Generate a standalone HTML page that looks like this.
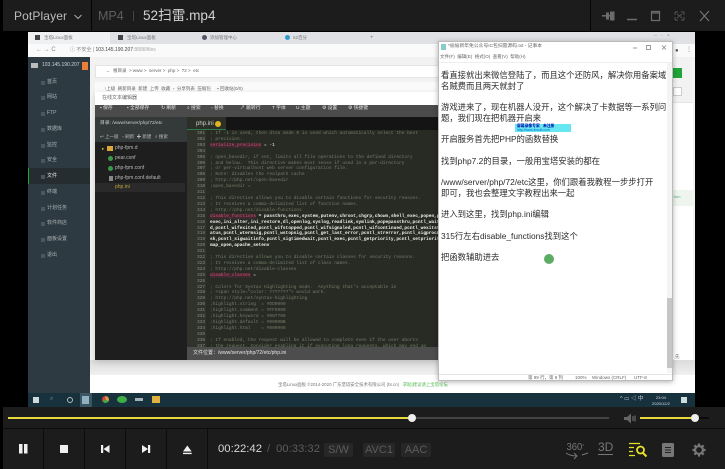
<!DOCTYPE html>
<html><head><meta charset="utf-8"><style>
*{margin:0;padding:0;box-sizing:border-box}
html,body{width:725px;height:469px;overflow:hidden;background:#000;font-family:"Liberation Sans","Noto Sans CJK SC",sans-serif}
.a{position:absolute;white-space:nowrap}
#v{position:absolute;left:28px;top:32px;width:667px;height:375px;background:#fff;overflow:hidden;filter:blur(.35px)}
#v .a{line-height:1}
.m{font-family:"Liberation Mono","Noto Sans CJK SC",monospace;font-size:4.5px;line-height:5.9px;white-space:pre}
#v .m{line-height:5.9px}
.n{font-family:"Liberation Sans","Noto Sans CJK SC",sans-serif;font-size:8.35px;color:#2c2c2c;left:3px;line-height:1}
.sb{color:#aab3b7;font-size:5px;left:19px}
.sb::before{content:"";position:absolute;left:-6px;top:.5px;width:4px;height:4px;background:#4a575e}
.tb{color:#e2e2e2;font-size:4.8px;top:75px}
.fi{left:87px;font-size:5px;color:#b8b8b8}
</style></head><body>
<div class="a" style="left:3px;top:0;width:722px;height:31px;background:#1c1c1c"></div>
<div class="a" style="left:91px;top:0;width:1px;height:31px;background:#050505"></div>
<div class="a" style="left:590px;top:0;width:1px;height:31px;background:#050505"></div>
<div class="a" style="left:14px;top:9px;font-size:12px;color:#bcbcbc;letter-spacing:.12px;line-height:15px">PotPlayer</div>
<svg class="a" style="left:74px;top:14px" width="8" height="6"><path d="M.5 1l3.500 3.500L7.500 1" stroke="#aaa" fill="none"/></svg>
<div class="a" style="left:98px;top:9px;font-size:12.500px;color:#5e5e5e;line-height:15px">MP4</div>
<div class="a" style="left:133px;top:11px;width:1px;height:10px;background:#444"></div>
<div class="a" style="left:143px;top:8px;font-size:13.600px;color:#d2d2d2;line-height:16px">52扫雷.mp4</div>
<svg class="a" style="left:600px;top:7px" width="120" height="18" fill="none" stroke="#6c6c6c">
<path d="M2 9h4M6 5.500h3v7H6M10 4.500h4.500v9H10z" fill="#6c6c6c" stroke="none"/><path d="M2 8.800h10" stroke-width="1.500"/>
<path d="M27 12.500h10" stroke-width="1.500"/>
<path d="M51.500 4.500h8v9h-8zM51.500 6h8" stroke-width="1.200"/>
<path d="M75 5h3M75 5v3M84 5h-3M84 5v3M75 13h3M75 13v-3M84 13h-3M84 13v-3M77 7l5 4M82 7l-5 4" stroke-width=".7"/>
<path d="M100 4l9 10M109 4l-9 10" stroke="#777" stroke-width="1.100"/></svg>

<div id="v">
<div class="a" style="left:0;top:0;width:667px;height:12px;background:#dfe1e5"></div>
<div class="a" style="left:0;top:0;width:82px;height:12px;background:#eef0f2"></div>
<div class="a" style="left:7px;top:3px;width:5px;height:5px;background:#444"></div><div class="a" style="left:16px;top:3.500px;font-size:4.500px;color:#777">宝塔Linux面板</div>
<div class="a" style="left:90px;top:3px;width:5px;height:5px;background:#444"></div><div class="a" style="left:99px;top:3.500px;font-size:4.500px;color:#777">宝塔Linux面板</div>
<div class="a" style="left:174px;top:3px;width:5px;height:5px;border-radius:3px;background:#556"></div><div class="a" style="left:182px;top:3.500px;font-size:4.500px;color:#777">添加管理中心</div>
<div class="a" style="left:257px;top:3px;width:5px;height:5px;border-radius:3px;background:#39c"></div><div class="a" style="left:265px;top:3.500px;font-size:4.500px;color:#777">52百分</div>
<div class="a" style="left:342px;top:2.500px;font-size:6px;color:#888">+</div>
<div class="a" style="left:0;top:12px;width:667px;height:13px;background:#fafafa"></div>
<div class="a" style="left:8px;top:15px;font-size:6px;color:#888">← → C</div>
<div class="a" style="left:42px;top:16px;font-size:5px;color:#888">ⓘ 不安全 | <span style="color:#444">103.145.190.207</span><span style="color:#aaa">:8888/files</span></div>
<div class="a" style="left:0;top:25px;width:62px;height:336px;background:#2e3a41"></div>
<div class="a" style="left:3px;top:31px;width:7px;height:5px;background:#bbb"></div>
<div class="a" style="left:14px;top:31px;font-size:5px;color:#cdd3d6">103.145.190.207</div>
<div class="a" style="left:54px;top:30px;width:6px;height:8px;background:#e8803a"></div>
<div class="a" style="left:0;top:136px;width:62px;height:16px;background:#262d31"></div>
<div class="a" style="left:0;top:136px;width:1px;height:16px;background:#20a53a"></div>
<div class="a sb" style="top:48px">首页</div><div class="a sb" style="top:63px">网站</div><div class="a sb" style="top:79px">FTP</div><div class="a sb" style="top:95px">数据库</div><div class="a sb" style="top:111px">监控</div><div class="a sb" style="top:126px">安全</div><div class="a sb" style="top:142px;color:#eee">文件</div><div class="a sb" style="top:158px">终端</div><div class="a sb" style="top:174px">计划任务</div><div class="a sb" style="top:189px">软件商店</div><div class="a sb" style="top:205px">面板设置</div><div class="a sb" style="top:221px">退出</div>
<div class="a" style="left:62px;top:25px;width:605px;height:336px;background:#f2f2f2"></div>
<div class="a" style="left:67px;top:33px;width:580px;height:13px;background:#fff;border:1px solid #e4e4e4"></div>
<div class="a" style="left:78px;top:37px;font-size:4.500px;color:#666">← &nbsp;根目录 &nbsp;&gt; www &gt; &nbsp;server &gt; &nbsp;php &gt; &nbsp;72 &gt; &nbsp;etc</div>
<div class="a" style="left:67px;top:50px;width:580px;height:12px;background:#fafafa"></div>
<div class="a" style="left:76px;top:55px;font-size:4.500px;color:#666">↑上级 &nbsp;刷新目录 &nbsp;新建 &nbsp;上传 &nbsp;收藏 &nbsp;▫ &nbsp;分享列表 &nbsp;压缩包 &nbsp; &nbsp; ▪ 回收站(0/0)</div>
<div class="a" style="left:645px;top:36px;width:9px;height:10px;background:#20a53a"></div>
<div class="a" style="left:645px;top:55px;width:9px;height:9px;background:#fff;border:1px solid #ccc"></div>
<div class="a" style="left:645px;top:70px;width:20px;height:290px;background:#fff;border-top:1px solid #e4e4e4"></div>
<div class="a" style="left:645px;top:158px;width:20px;height:16px;background:#eef5ee"></div>
<div class="a" style="left:646px;top:163px;font-size:4px;color:#5a9">tion</div>
<div class="a" style="left:647px;top:323px;font-size:4.500px;color:#777">先</div>
<div class="a" style="left:647px;top:15.500px;font-size:6px;color:#555">●</div>
<div class="a" style="left:658px;top:15px;font-size:6px;color:#777">⋮</div>
<div class="a" style="left:626px;top:2px;font-size:5px;color:#999">–&nbsp;&nbsp;&nbsp;▫&nbsp;&nbsp;&nbsp;×</div>
<div class="a" style="left:62px;top:328px;width:605px;height:15px;background:linear-gradient(#dcdcdc,#f0f0f0)"></div>
<div class="a" style="left:62px;top:343px;width:605px;height:18px;background:#fff"></div>
<div class="a" style="left:250px;top:351px;font-size:4.400px;color:#777">宝塔Linux面板 ©2014-2020 广东堡塔安全技术有限公司 (bt.cn) &nbsp; <span style="color:#5b5">求助|建议请上宝塔论坛</span></div>
<div class="a" style="left:0;top:361px;width:667px;height:14px;background:#17313d"></div>
<div class="a" style="left:5px;top:365px;width:6px;height:6px;background:#cfd8de"></div>
<div class="a" style="left:22px;top:364px;font-size:6px;color:#889">⌕</div>
<div class="a" style="left:39px;top:365px;width:6px;height:6px;border:1.200px solid #bbb;border-radius:50%"></div>
<div class="a" style="left:52px;top:361px;width:12px;height:14px;background:#3d5563"></div>
<div class="a" style="left:54px;top:364px;width:7px;height:8px;background:#8fb0bf"></div>
<div class="a" style="left:74px;top:364px;width:7px;height:7px;border-radius:50%;background:conic-gradient(#d94 0 33%,#4a4 0 66%,#c44 0)"></div>
<div class="a" style="left:89px;top:364px;width:10px;height:7px;border-radius:50%;background:#3fae49"></div>
<div class="a" style="left:107px;top:366px;width:8px;height:3px;background:#a5b0b8"></div>
<div class="a" style="left:124px;top:364px;width:8px;height:7px;background:#e0b040"></div>
<div class="a" style="left:592px;top:365px;font-size:5.500px;color:#ccd">^ ▭ ◁ 中</div>
<div class="a" style="left:624px;top:363px;font-size:4px;color:#dde;text-align:center;line-height:5.500px">23:04<br>2020/12/2</div>
<div class="a" style="left:653px;top:365px;width:6px;height:6px;background:#cdd"></div>
<div class="a" style="left:67px;top:60px;width:345px;height:268px;background:#fff;box-shadow:0 2px 6px rgba(0,0,0,.15)"></div>
<div class="a" style="left:74px;top:64px;font-size:5px;color:#666">在线文本编辑器</div>
<div class="a" style="left:67px;top:73px;width:345px;height:12px;background:#4b4b4b"></div>
<div class="a tb" style="left:72px">▪ 保存</div><div class="a tb" style="left:99px">▪ 全部保存</div><div class="a tb" style="left:133px">↻ 刷新</div><div class="a tb" style="left:159px">⌕ 搜索</div><div class="a tb" style="left:183px">▫ 替换</div><div class="a tb" style="left:212px">↗ 跳转行</div><div class="a tb" style="left:244px">T 字体</div><div class="a tb" style="left:268px">U 主题</div><div class="a tb" style="left:294px">⚙ 设置</div><div class="a tb" style="left:320px">⚙ 快捷键</div>
<div class="a" style="left:67px;top:85px;width:92px;height:243px;background:#1e1e1e"></div>
<div class="a" style="left:67px;top:85px;width:92px;height:25px;background:#343a3a"></div>
<div class="a" style="left:72px;top:90px;font-size:4.800px;color:#ccc">目录: /www/server/php/72/etc</div>
<div class="a" style="left:72px;top:103px;font-size:4.500px;color:#bbb">↩ 上一级 &nbsp; ▫ 刷新 &nbsp;✚ 新建 &nbsp; ⌕ 搜索</div>
<div class="a" style="left:74px;top:115px;font-size:4.500px;color:#d8c040">▸</div>
<div class="a" style="left:79px;top:114px;width:6px;height:5px;background:#d8a93a"></div>
<div class="a fi" style="top:114px">php-fpm.d</div>
<div class="a" style="left:80px;top:124px;width:5px;height:5px;border-radius:50%;background:#3a9a4a"></div>
<div class="a fi" style="top:124px">pear.conf</div>
<div class="a" style="left:80px;top:134px;width:5px;height:5px;border-radius:50%;background:#3a9a4a"></div>
<div class="a fi" style="top:134px">php-fpm.conf</div>
<div class="a" style="left:81px;top:144px;width:4px;height:5px;background:#888"></div>
<div class="a fi" style="top:144px">php-fpm.conf.default</div>
<div class="a" style="left:67px;top:151px;width:90px;height:9px;background:#2a2a2a"></div>
<div class="a fi" style="top:153px;color:#c0a040">php.ini</div>
<div class="a" style="left:159px;top:85px;width:253px;height:243px;background:#272b23"></div>
<div class="a" style="left:159px;top:85px;width:253px;height:13px;background:#141414"></div>
<div class="a" style="left:159px;top:85px;width:39px;height:13px;background:#2b2f27;border-bottom:1px solid #2f7a4a"></div>
<div class="a" style="left:168px;top:88.500px;font-size:6px;color:#d0d0d0">php.ini</div>
<div class="a" style="left:187px;top:89px;width:6px;height:6px;border-radius:50%;background:#e0b520"></div>
<div class="a" style="left:159px;top:98px;width:19px;height:217px;background:#2f332b"></div>
<div class="a m" style="left:169px;top:99px;color:#888d80">301
302
303
304
305
306
307
308
309
310
311
312
313
314
315
316
317
318
319
320
321
322
323
324
325
326
327
328
329
330
331
332
333
334
335
336
337</div>
<div class="a m" style="left:182px;top:99px;color:#767c6b">; If -1 is used, then dtoa mode 0 is used which automatically select the best
; precision.
<span style="color:#e04a70;background:#3d2a30">serialize_precision</span><span style="color:#eee"> = -1</span>

; open_basedir, if set, limits all file operations to the defined directory
; and below.  This directive makes most sense if used in a per-directory
; or per-virtualhost web server configuration file.
; Note: disables the realpath cache
; http://php.net/open-basedir
;open_basedir =

; This directive allows you to disable certain functions for security reasons.
; It receives a comma-delimited list of function names.
; http://php.net/disable-functions
<span style="color:#e04a70;background:#3d2a30">disable_functions</span><span style="color:#f2f2f2;font-weight:bold"> = passthru,exec,system,putenv,chroot,chgrp,chown,shell_exec,popen,proc_open,
exec,ini_alter,ini_restore,dl,openlog,syslog,readlink,symlink,popepassthru,pcntl_wait,pcntl
d,pcntl_wifexited,pcntl_wifstopped,pcntl_wifsignaled,pcntl_wifcontinued,pcntl_wexitstatus,p
atus,pcntl_wtermsig,pcntl_wstopsig,pcntl_get_last_error,pcntl_strerror,pcntl_sigprocmask,pc
sk,pcntl_sigwaitinfo,pcntl_sigtimedwait,pcntl_exec,pcntl_getpriority,pcntl_setpriority,imap
map_open,apache_setenv</span>

; This directive allows you to disable certain classes for security reasons.
; It receives a comma-delimited list of class names.
; http://php.net/disable-classes
<span style="color:#e04a70;background:#3d2a30">disable_classes</span><span style="color:#eee"> =</span>

; Colors for Syntax Highlighting mode.  Anything that's acceptable in
; &lt;span style="color: ???????"&gt; would work.
; http://php.net/syntax-highlighting
;highlight.string  = #DD0000
;highlight.comment = #FF9900
;highlight.keyword = #007700
;highlight.default = #0000BB
;highlight.html    = #000000

; If enabled, the request will be allowed to complete even if the user aborts
; the request. Consider enabling it if executing long requests, which may end up</div>
<div class="a" style="left:159px;top:315px;width:253px;height:13px;background:#4d4d4d"></div>
<div class="a" style="left:165px;top:319px;font-size:5px;color:#e4e4e4">文件位置：/www/server/php/72/etc/php.ini</div>

<div class="a" style="left:410px;top:9px;width:235px;height:340px;background:#fff;border:1px solid #bbb;box-shadow:0 1px 5px rgba(0,0,0,.3)"></div>
<div class="a" style="left:413px;top:12px;width:5px;height:6px;background:#8cc"></div>
<div class="a" style="left:420px;top:13px;font-size:4.800px;color:#666">*偷偷新年免公众号IC包扫雷源码.txt - 记事本</div>
<svg class="a" style="left:603px;top:11px" width="40" height="9" fill="none" stroke="#777" stroke-width=".7"><path d="M2 5h4M15.500 2.500h4v4h-4zM31 2.500l4 4M35 2.500l-4 4"/></svg>
<div class="a" style="left:412px;top:23px;font-size:4.500px;color:#666">文件(F)&nbsp; 编辑(E)&nbsp; 格式(O)&nbsp; 查看(V)&nbsp; 帮助(H)</div>
<div class="a" style="left:411px;top:30px;width:233px;height:1px;background:#eee"></div>
<div class="a" style="left:639px;top:31px;width:5px;height:310px;background:#f4f4f4"></div>
<div class="a" style="left:639px;top:266px;width:5px;height:70px;background:#c6c6c6"></div>
<div style="position:absolute;left:410px;top:0;width:218px;height:340px">
<div class="a n" style="top:39px">看直接就出来微信登陆了，而且这个还防风，解决你用备案域</div>
<div class="a n" style="top:50px">名贼费而且两天就封了</div>
<div class="a n" style="top:71px">游戏进来了，现在机器人没开，这个解决了卡数据等一系列问</div>
<div class="a n" style="top:82px">题，我们现在把机器开启来</div>
<div class="a n" style="top:103px">开启服务首先把PHP的函数替换</div>
<div class="a n" style="top:125px">找到php7.2的目录，一般用宝塔安装的都在</div>
<div class="a n" style="top:146px">/www/server/php/72/etc这里，你们跟着我教程一步步打开</div>
<div class="a n" style="top:157px">即可，我也会整理文字教程出来一起</div>
<div class="a n" style="top:178px">进入到这里，找到php.ini编辑</div>
<div class="a n" style="top:200px">315行左右disable_functions找到这个</div>
<div class="a n" style="top:221px">把函数辅助进去</div>
</div>
<div class="a" style="left:487px;top:92px;width:56px;height:8px;background:#66e6f0"></div>
<div class="a" style="left:489px;top:92.500px;font-size:3.800px;color:#00a;font-weight:bold">屏幕录像专家 &nbsp; 未注册</div>
<div class="a" style="left:489px;top:96.500px;font-size:3.400px;color:#06c">http://www.tlxsoft.com</div>
<div class="a" style="left:516px;top:222px;width:10px;height:10px;border-radius:50%;background:#5cac64"></div>
<div class="a" style="left:411px;top:342px;width:233px;height:1px;background:#e5e5e5"></div>
<div class="a" style="left:500px;top:344px;font-size:4.500px;color:#666">第 99 行，第 8 列</div>
<div class="a" style="left:547px;top:344px;font-size:4.500px;color:#666">100%</div>
<div class="a" style="left:564px;top:344px;font-size:4.500px;color:#666">Windows (CRLF)</div>
<div class="a" style="left:606px;top:344px;font-size:4.500px;color:#666">UTF-8</div>
</div>

<div class="a" style="left:3px;top:407px;width:722px;height:62px;background:#1c1c1c"></div>
<div class="a" style="left:3px;top:428px;width:722px;height:1px;background:#0c0c0c"></div>
<div class="a" style="left:8px;top:417px;width:404px;height:2px;background:#e8d93a"></div>
<div class="a" style="left:412px;top:417px;width:197px;height:2px;background:#444"></div>
<div class="a" style="left:408px;top:414px;width:8px;height:8px;border-radius:50%;background:#eee"></div>
<svg class="a" style="left:624px;top:413px" width="12" height="11"><path d="M0 4h3l4-3.500v10L3 7H0z" fill="#666"/><path d="M9 3v5M11 2.500v6" stroke="#777"/></svg>
<div class="a" style="left:640px;top:417px;width:55px;height:2px;background:#e8d93a"></div>
<div class="a" style="left:695px;top:417px;width:14px;height:2px;background:#0a0a0a"></div>
<div class="a" style="left:691px;top:414px;width:8px;height:8px;border-radius:50%;background:#eee"></div>
<div class="a" style="left:43px;top:429px;width:1px;height:40px;background:#0c0c0c"></div>
<div class="a" style="left:84px;top:429px;width:1px;height:40px;background:#0c0c0c"></div>
<div class="a" style="left:125px;top:429px;width:1px;height:40px;background:#0c0c0c"></div>
<div class="a" style="left:166px;top:429px;width:1px;height:40px;background:#0c0c0c"></div>
<div class="a" style="left:207px;top:429px;width:1px;height:40px;background:#0c0c0c"></div>
<svg class="a" style="left:0;top:429px" width="210" height="40" fill="#f0f0f0">
<path d="M19 15h3.500v9.500H19zM24 15h3.500v9.500H24z"/>
<path d="M60 16h8v8h-8z"/>
<path d="M101 16h2.200v8H101zM109.500 16v8l-6-4z"/>
<path d="M142 16v8l6-4zM148 16h2.200v8H148z"/>
<path d="M183 22.500l4.300-6 4.300 6zM183 23.800h8.700v1.300H183z"/>
</svg>
<div class="a" style="left:218px;top:443px;font-size:11.300px;color:#d8d8d8;line-height:13px">00:22:42</div>
<div class="a" style="left:267px;top:443px;font-size:11.300px;color:#555;line-height:13px">/</div>
<div class="a" style="left:276px;top:443px;font-size:11.300px;color:#5c5c5c;line-height:13px">00:33:32</div>
<div class="a" style="left:324px;top:443px;width:29px;height:14px;background:#272727;border-radius:2px;text-align:center;font-size:11px;color:#5c5c5c;line-height:14px">S/W</div>
<div class="a" style="left:363px;top:443px;width:32px;height:14px;background:#272727;border-radius:2px;text-align:center;font-size:11px;color:#5c5c5c;line-height:14px">AVC1</div>
<div class="a" style="left:401px;top:443px;width:30px;height:14px;background:#272727;border-radius:2px;text-align:center;font-size:11px;color:#5c5c5c;line-height:14px">AAC</div>
<div class="a" style="left:566px;top:442px;font-size:10px;color:#777;line-height:11px;transform:scaleX(.95)">360<span style="font-size:5px;vertical-align:top">°</span></div>
<svg class="a" style="left:565px;top:452px" width="24" height="8" fill="none" stroke="#777"><path d="M1 1q4 3 11 3M9 1l3 3-3 3M17 3l6-2"/></svg>
<div class="a" style="left:598px;top:441px;font-size:12px;color:#777;line-height:12px;border-bottom:1px solid #777;padding-bottom:1px">3D</div>
<svg class="a" style="left:628px;top:442px" width="20" height="16" fill="none" stroke="#e8e020" stroke-width="1.300"><path d="M1 1.500h11M1 5.500h5M1 9.500h4M1 13.500h6"/><circle cx="12.500" cy="8" r="3.500" stroke-width="1.800"/><path d="M15 11l3.500 3.500" stroke-width="2"/></svg>
<svg class="a" style="left:662px;top:443px" width="12" height="14"><rect width="12" height="14" rx="1.500" fill="#777"/><path d="M3 4.500h6M3 7h6M3 9.500h6" stroke="#222"/></svg>
<svg class="a" style="left:692px;top:443px" width="14" height="14" viewBox="0 0 16 16"><circle cx="8" cy="8" r="4.500" fill="none" stroke="#777" stroke-width="2.500"/><path d="M8 .5v3M8 12.500v3M.5 8h3M12.500 8h3M2.700 2.700l2.200 2.200M11.100 11.100l2.200 2.200M2.700 13.300l2.200-2.200M11.100 4.900l2.200-2.200" stroke="#777" stroke-width="2.500"/></svg>
</body></html>
